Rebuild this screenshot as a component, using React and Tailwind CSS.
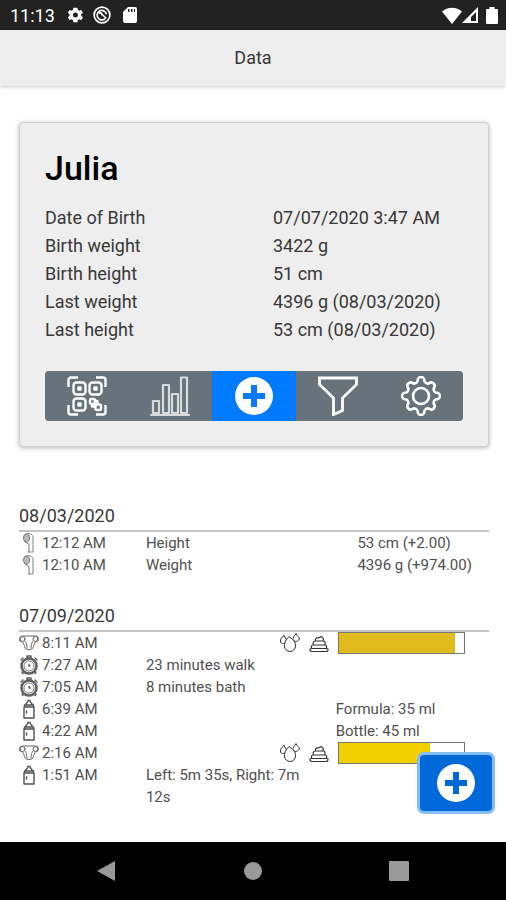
import React from "react";

const profile = [
  ["Date of Birth", "07/07/2020 3:47 AM"],
  ["Birth weight", "3422 g"],
  ["Birth height", "51 cm"],
  ["Last weight", "4396 g (08/03/2020)"],
  ["Last height", "53 cm (08/03/2020)"],
];

const days = [
  {
    date: "08/03/2020",
    entries: [
      { kind: "measure", time: "12:12 AM", text: "Height", value: "53 cm (+2.00)" },
      { kind: "measure", time: "12:10 AM", text: "Weight", value: "4396 g (+974.00)" },
    ],
  },
  {
    date: "07/09/2020",
    entries: [
      { kind: "diaper", time: "8:11 AM", level: 93, tone: "bg-[#dfbc1c]" },
      { kind: "timer", time: "7:27 AM", text: "23 minutes walk" },
      { kind: "timer", time: "7:05 AM", text: "8 minutes bath" },
      { kind: "bottle", time: "6:39 AM", amount: "Formula: 35 ml" },
      { kind: "bottle", time: "4:22 AM", amount: "Bottle: 45 ml" },
      { kind: "diaper", time: "2:16 AM", level: 73, tone: "bg-[#f2d000]" },
      { kind: "bottle", time: "1:51 AM", text: "Left: 5m 35s, Right: 7m 12s" },
    ],
  },
];

function Svg({ children, box = "0 0 40 40", className }) {
  return (
    <svg viewBox={box} className={className} fill="none" stroke="currentColor" strokeLinejoin="round" strokeLinecap="round" aria-hidden="true">
      {children}
    </svg>
  );
}

function QrIcon() {
  return (
    <Svg className="size-10">
      <g strokeWidth="2.400" strokeLinecap="butt">
        <path d="M1.500 11V4a2.500 2.500 0 0 1 2.500-2.500h7M29 1.500h7a2.500 2.500 0 0 1 2.500 2.500v7M38.500 29v7a2.500 2.500 0 0 1-2.500 2.500h-7M11 38.500H4A2.500 2.500 0 0 1 1.500 36v-7" />
        <rect x="6.500" y="6.500" width="12" height="12" rx="3" />
        <rect x="22.500" y="6.500" width="12" height="12" rx="3" />
        <rect x="6.500" y="22.500" width="12" height="12" rx="3" />
        <rect x="11.500" y="11.500" width="2" height="2" />
        <rect x="27.500" y="11.500" width="2" height="2" />
        <rect x="11.500" y="27.500" width="2" height="2" />
        <rect x="23" y="23" width="5" height="5" rx="1.500" />
        <rect x="28.500" y="28.500" width="5.500" height="5.500" rx="1.500" />
        <path d="M28 25h2.500v3.500M25 28v2.500h3.500" />
      </g>
    </Svg>
  );
}

function ChartIcon() {
  return (
    <Svg className="size-10 text-[#d8dadc]">
      <path strokeWidth="2.200" d="M1 39h38M3 37V25h6v12ZM13 37V9h6v28ZM22 37V18h6v19ZM31 37V1.500h6V37Z" />
    </Svg>
  );
}

function PlusIcon({ className }) {
  return (
    <svg viewBox="0 0 40 40" className={className} aria-hidden="true">
      <path fill="white" fillRule="evenodd" d="M20 1a19 19 0 1 0 0 38 19 19 0 0 0 0-38ZM17 9h6v8h8v6h-8v8h-6v-8H9v-6h8Z" />
    </svg>
  );
}

function FunnelIcon() {
  return (
    <Svg className="size-10">
      <path strokeWidth="2.800" strokeLinejoin="miter" d="M1.500 2h37v6.500L24.500 22v12.500l-9 4V22L1.500 8.500Z" />
    </Svg>
  );
}

function GearIcon() {
  return (
    <Svg className="size-10">
      <circle cx="20" cy="20" r="8" strokeWidth="2.600" />
      <path
        strokeWidth="2.600"
        d="M16.500 5.500a3.500 4.500 0 0 1 7 0 4 4 0 0 0 4.300 2 3.500 4 45 0 1 4.900 4.900 4 4 0 0 0 1.800 4.100 4.500 3.500 0 0 1 0 7 4 4 0 0 0-1.800 4.100 4 3.500 45 0 1-4.900 4.900 4 4 0 0 0-4.300 2 3.500 4.500 0 0 1-7 0 4 4 0 0 0-4.300-2 3.500 4 45 0 1-4.900-4.900 4 4 0 0 0-1.800-4.100 4.500 3.500 0 0 1 0-7 4 4 0 0 0 1.800-4.100 4 3.500 45 0 1 4.900-4.900 4 4 0 0 0 4.300-2Z"
      />
    </Svg>
  );
}

function MeasureIcon() {
  return (
    <Svg box="0 0 20 20" className="size-5 shrink-0 text-[#777]">
      <path d="M6 1.500c3-1.500 8-1 8 2.500v15h-4" strokeDasharray="2 1" />
      <ellipse cx="7.500" cy="5" rx="3" ry="4" fill="#bbb" />
      <path d="M5.500 8.500c1 2 4 1 4.500 3.500v7" />
    </Svg>
  );
}

function DiaperIcon() {
  return (
    <Svg box="0 0 20 20" className="size-5 shrink-0 text-[#666]">
      <path d="M1 4c0-1 3-1 5-1h8c2 0 5 0 5 1v4c-3 0-4 3-5 7-2 2-6 2-8 0-1-4-2-7-5-7Z" />
      <circle cx="3.500" cy="6" r="2.500" />
      <circle cx="16.500" cy="6" r="2.500" />
      <path d="M8 15c0-4-1-6-2-7M12 15c0-4 1-6 2-7" />
    </Svg>
  );
}

function TimerIcon() {
  return (
    <Svg box="0 0 20 20" className="size-5 shrink-0 text-[#606060]">
      <circle cx="10" cy="11" r="7.500" strokeWidth="2.600" />
      <circle cx="10" cy="11" r="5" strokeDasharray="1 1" />
      <path d="M8 1h4v2H8ZM2 5l2-2M18 5l-2-2M10 9.500v1.500h1M3 17l1 1.500M17 17l-1 1.500" strokeWidth="1.500" />
    </Svg>
  );
}

function BottleIcon() {
  return (
    <Svg box="0 0 20 20" className="size-5 shrink-0 text-[#505050]">
      <path strokeWidth="1.400" d="M5 8h10v11H5ZM5.500 8V6h9v2M6.500 6c0-2 2.500-2 2.500-4.500h2C11 4 13.500 4 13.500 6M7.500 12v2" />
    </Svg>
  );
}

function WetIcon() {
  return (
    <Svg box="0 0 20 20" className="size-5 shrink-0 text-[#333]">
      <path d="M6 7c-1 2-1.500 4-1.500 6a5.500 5.500 0 0 0 11 0c0-2-.5-4-1.500-5.500M6 7 9 3.500 12 6M4 2.500C2 4 0 6 .5 9c1 2 3 2 4 1M4 2.500 6 6M16 1c-2 2-3.500 4-3 6 1 2 4 2.500 6.500-1 0-2-2.500-3-3.500-5Z" />
    </Svg>
  );
}

function PoopIcon() {
  return (
    <Svg box="0 0 20 20" className="size-5 shrink-0 text-[#333]">
      <path strokeWidth="1.200" d="M6.500 8C6 6 7 4.500 9.500 5L12 3.500c2 1 3 2.500 2 4.500M6 8h8.500c2 0 2 3 1 4H4.500C3.500 10 4.500 8 6 8ZM4 12h12c2 0 2 2.500 1 3.500H3C2 15 2 12 4 12ZM2 15.500h16c2 0 1 3-1 3H3c-2 0-3-3-1-3Z" />
    </Svg>
  );
}

const entryIcons = { measure: MeasureIcon, diaper: DiaperIcon, timer: TimerIcon, bottle: BottleIcon };

function StatusBar() {
  return (
    <div className="flex h-[30px] items-center bg-[#222] pr-2 pl-[10px] text-white">
      <span className="text-[18px]">11:13</span>
      <svg viewBox="0 0 24 24" className="ml-[10px] size-5" fill="white" aria-hidden="true">
        <path fillRule="evenodd" d="M19.400 13a7.500 7.500 0 0 0 0-2l2.100-1.600-2-3.500-2.500 1a7.500 7.500 0 0 0-1.700-1L15 3.300h-5l-.4 2.600a7.500 7.500 0 0 0-1.700 1l-2.500-1-2 3.500L5.500 11a7.500 7.500 0 0 0 0 2l-2.100 1.600 2 3.500 2.500-1a7.500 7.500 0 0 0 1.700 1l.4 2.600h5l.4-2.600a7.500 7.500 0 0 0 1.700-1l2.500 1 2-3.500ZM12.500 9a3 3 0 1 1 0 6 3 3 0 0 1 0-6Z" />
      </svg>
      <svg viewBox="0 0 24 24" className="ml-2 size-[18px]" fill="none" stroke="white" strokeWidth="2.200" aria-hidden="true">
        <circle cx="12" cy="12" r="10.500" />
        <path d="M17.500 15A6.300 6.300 0 1 1 18 11M8 9.500c3-1 4 0 4 3M10 9l7 7" />
      </svg>
      <svg viewBox="0 0 14 16" className="ml-3 h-4 w-[14px]" fill="white" aria-hidden="true">
        <path fillRule="evenodd" d="M5 0h7a2 2 0 0 1 2 2v12a2 2 0 0 1-2 2H2a2 2 0 0 1-2-2V5ZM5 2v3h1.500V2ZM8 2v3h1.500V2ZM11 2v3h1V2Z" />
      </svg>
      <svg viewBox="0 0 20 17" className="ml-auto h-[17px] w-5" fill="white" aria-hidden="true">
        <path d="M0 4.500a15 15 0 0 1 20 0L10 17Z" />
      </svg>
      <svg viewBox="0 0 16 16" className="h-4 w-4" fill="white" aria-hidden="true">
        <path fillRule="evenodd" d="M16 0v16H0ZM14 5 9 10v4h5Z" />
      </svg>
      <svg viewBox="0 0 12 17" className="ml-2 h-[17px] w-3" fill="white" aria-hidden="true">
        <path d="M3.500 2V0h5v2H11a1 1 0 0 1 1 1v13a1 1 0 0 1-1 1H1a1 1 0 0 1-1-1V3a1 1 0 0 1 1-1Z" />
      </svg>
    </div>
  );
}

function Entry({ entry }) {
  const Icon = entryIcons[entry.kind];
  return (
    <li className="flex min-h-[22px] items-start text-[15px] leading-[22px] text-[#505050]">
      <div className="flex w-[27%] shrink-0 items-center gap-[3px]">
        <Icon />
        <span>{entry.time}</span>
      </div>
      <span className="w-[34%] shrink-0">{entry.text}</span>
      {entry.value && <span className="ml-[11%]">{entry.value}</span>}
      {entry.amount && <span className="ml-[30px]">{entry.amount}</span>}
      {entry.level && (
        <div className="-ml-[26px] flex flex-1 items-center gap-[9px] pr-6">
          <WetIcon />
          <PoopIcon />
          <div className="h-[22px] flex-1 border border-[#777] bg-white">
            <div className={"h-full " + entry.tone} style={{ width: entry.level + "%" }} />
          </div>
        </div>
      )}
    </li>
  );
}

export default function App() {
  return (
    <div className="flex min-h-screen flex-col bg-white font-[Roboto,sans-serif] text-[#383838]">
      <StatusBar />
      <header className="flex h-14 items-center justify-center bg-[#eee] pb-[2px] shadow-[0_1px_4px_rgba(0,0,0,0.2)]">
        <h1 className="text-[18px]">Data</h1>
      </header>

      <main className="flex-1 pr-[17px] pl-[19px]">
        <section className="mt-9 rounded border border-[#d0d0d0] bg-[#eee] p-[25px] shadow-[0_1px_4px_rgba(0,0,0,0.3)]">
          <h2 className="text-[34px] leading-10 font-medium text-black">Julia</h2>
          <dl className="mt-4">
            {profile.map(([label, value]) => (
              <div key={label} className="flex text-[18px] leading-7">
                <dt className="w-[228px]">{label}</dt>
                <dd>{value}</dd>
              </div>
            ))}
          </dl>
          <div className="mt-[27px] flex h-[50px] overflow-hidden rounded-sm bg-[#67727a] text-white">
            <button aria-label="Scan code" className="flex flex-1 items-center justify-center"><QrIcon /></button>
            <button aria-label="Charts" className="flex flex-1 items-center justify-center"><ChartIcon /></button>
            <button aria-label="Add entry" className="flex flex-1 items-center justify-center bg-[#007bff]"><PlusIcon className="size-10" /></button>
            <button aria-label="Filter" className="flex flex-1 items-center justify-center"><FunnelIcon /></button>
            <button aria-label="Settings" className="flex flex-1 items-center justify-center"><GearIcon /></button>
          </div>
        </section>

        <div className="mt-[55px] flex flex-col gap-[26px]">
          {days.map((day) => (
            <section key={day.date}>
              <h3 className="border-b-2 border-[#c4c4c4] text-[18px] leading-7">{day.date}</h3>
              <ul>
                {day.entries.map((entry) => (
                  <Entry key={entry.time} entry={entry} />
                ))}
              </ul>
            </section>
          ))}
        </div>
      </main>

      <button
        aria-label="Add new entry"
        className="fixed right-[14px] bottom-[89px] flex h-14 w-[72px] items-center justify-center rounded bg-[#0069d9] ring-3 ring-[#85bdf9]"
      >
        <PlusIcon className="size-10" />
      </button>

      <nav className="flex h-[58px] items-center justify-around bg-black px-[34px] text-[#999]">
        <button aria-label="Back">
          <svg viewBox="0 0 20 20" className="size-5" fill="currentColor" aria-hidden="true"><path d="M0 10 18 0v20Z" /></svg>
        </button>
        <button aria-label="Home">
          <svg viewBox="0 0 20 20" className="size-5" fill="currentColor" aria-hidden="true"><circle cx="10" cy="10" r="9" /></svg>
        </button>
        <button aria-label="Recent apps">
          <svg viewBox="0 0 20 20" className="size-5" fill="currentColor" aria-hidden="true"><rect width="20" height="20" rx="1" /></svg>
        </button>
      </nav>
    </div>
  );
}
